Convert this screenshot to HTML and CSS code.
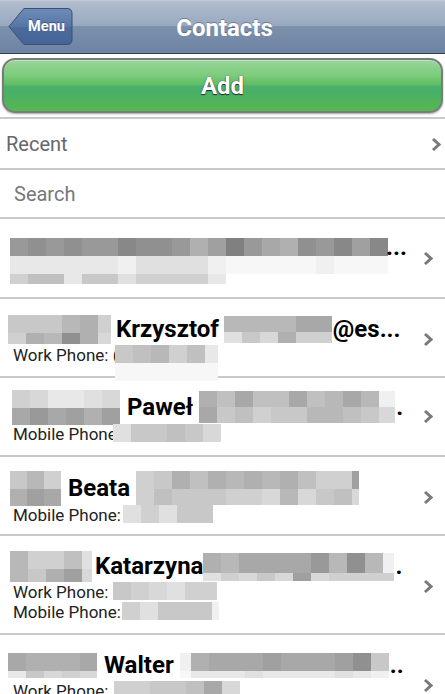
FILE: index.html
```html
<!DOCTYPE html>
<html lang="en">
<head>
<meta charset="utf-8">
<title>Contacts</title>
<link rel="stylesheet" href="styles.css">
</head>
<body>
<header class="navbar">
  <button class="back" type="button">
    <svg class="back-shape" viewBox="0 0 65 37" width="65" height="37" aria-hidden="true">
      <defs>
        <linearGradient id="bk" x1="0" y1="0" x2="0" y2="1">
          <stop offset="0" stop-color="#6e8cb8"/>
          <stop offset="0.5" stop-color="#5676a6"/>
          <stop offset="0.52" stop-color="#4b6b9c"/>
          <stop offset="1" stop-color="#45649a"/>
        </linearGradient>
      </defs>
      <path d="M1 18.5 L15 1.5 Q15.8 0.5 17 0.5 H59 Q64 0.5 64 5.5 V31.5 Q64 36.5 59 36.5 H17 Q15.8 36.5 15 35.5 Z" fill="url(#bk)" stroke="#3a4f72" stroke-width="1"/>
    </svg>
    <span class="back-label">Menu</span>
  </button>
  <h1 class="title">Contacts</h1>
  <span class="nav-spacer"></span>
</header>

<div class="add-wrap">
  <button class="add-btn" type="button">Add</button>
</div>

<div class="recent">
  <span>Recent</span>
  <svg class="chev chev-recent" viewBox="0 0 10 15" width="10" height="15"><path d="M2 2 L8 7.5 L2 13"/></svg>
</div>

<div class="search">
  <input class="search-input" type="text" placeholder="Search">
</div>

<ul class="contacts">
  <li class="contact row1">
    <div class="body">
      <div class="l1 top">
        <div class="mz ml2">
          <div class="mr h18"><i class="m99"></i><i class="m90"></i><i class="m99"></i><i class="m90"></i><i class="m99"></i><i class="m99"></i><i class="m88"></i><i class="m90"></i><i class="m90"></i><i class="m99"></i><i class="mb0"></i><i class="ma0"></i><i class="m80"></i><i class="m99"></i><i class="ma8"></i><i class="mb0"></i><i class="m90"></i><i class="m99"></i><i class="m88"></i><i class="ma0"></i><i class="m88"></i></div>
          <div class="mr h18"><i class="me8"></i><i class="me8"></i><i class="me8"></i><i class="me8"></i><i class="me8"></i><i class="me8"></i><i class="mf0"></i><i class="me0"></i><i class="me0"></i><i class="me0"></i><i class="me0"></i><i class="mf0"></i><i class="mf8"></i><i class="mf8"></i><i class="mf8"></i><i class="mf8"></i><i class="mf8"></i><i class="mf0"></i><i class="mf8"></i><i class="mf8"></i><i class="mf8"></i></div>
          <div class="mr h10"><i class="md0"></i><i class="mc0"></i><i class="mc0"></i><i class="me8"></i><i class="mc8"></i><i class="mc8"></i><i class="me0"></i><i class="md0"></i><i class="md0"></i><i class="md0"></i><i class="md0"></i><i class="me8"></i></div>
        </div>
        <span class="name dots">...</span>
      </div>
    </div>
    <svg class="chev" viewBox="0 0 10 15" width="10" height="15"><path d="M2 2 L8 7.5 L2 13"/></svg>
  </li>

  <li class="contact">
    <div class="body">
      <div class="l1">
        <div class="mz">
          <div class="mr h18"><i class="mc8"></i><i class="mc8"></i><i class="mc8"></i><i class="mb8"></i><i class="mb0"></i><i class="md0 w13"></i></div>
          <div class="mr h11"><i class="md0"></i><i class="mb0"></i><i class="mb8"></i><i class="m90"></i><i class="mb0"></i><i class="md8 w13"></i></div>
        </div>
        <span class="name">Krzysztof</span>
        <div class="mz">
          <div class="mr h16"><i class="mb8"></i><i class="mb8"></i><i class="mb8"></i><i class="mb8"></i><i class="ma8"></i><i class="ma8"></i></div>
          <div class="mr h11"><i class="me0"></i><i class="mc8"></i><i class="md8"></i><i class="mb0"></i><i class="md0"></i><i class="md0"></i></div>
        </div>
        <span class="name tight">@es...</span>
      </div>
      <div class="l2">
        <span>Work Phone: (</span>
        <div class="mz mlm3">
          <div class="mr h18"><i class="mc8"></i><i class="mc0"></i><i class="mb8"></i><i class="md0"></i><i class="mc0"></i><i class="me8 w13"></i></div>
          <div class="mr h18"><i class="mf8"></i><i class="mf8"></i><i class="mf8"></i><i class="mf8"></i><i class="mf8"></i><i class="mf8 w13"></i></div>
        </div>
      </div>
    </div>
    <svg class="chev" viewBox="0 0 10 15" width="10" height="15"><path d="M2 2 L8 7.5 L2 13"/></svg>
  </li>

  <li class="contact tall up">
    <div class="body">
      <div class="l1">
        <div class="mz ml4">
          <div class="mr h18"><i class="md0"></i><i class="md8"></i><i class="me8"></i><i class="me8"></i><i class="me0"></i><i class="md8"></i></div>
          <div class="mr h17"><i class="ma8"></i><i class="m99"></i><i class="ma8"></i><i class="ma0"></i><i class="mb0"></i><i class="ma0"></i></div>
        </div>
        <span class="name wide">Paweł</span>
        <div class="mz">
          <div class="mr h16"><i class="mb0"></i><i class="mc0"></i><i class="ma8"></i><i class="mc0"></i><i class="mc0"></i><i class="ma8"></i><i class="mc0"></i><i class="mb8"></i><i class="ma8"></i><i class="mb8"></i><i class="mf0 w16"></i></div>
          <div class="mr h16"><i class="ma8"></i><i class="mc8"></i><i class="mc0"></i><i class="md0"></i><i class="mc8"></i><i class="mc8"></i><i class="mb8"></i><i class="mb8"></i><i class="mc0"></i><i class="mc8"></i><i class="md8 w16"></i></div>
        </div>
        <span class="name tight">.</span>
      </div>
      <div class="l2">
        <span>Mobile Phone:</span>
        <div class="mz mlm8">
          <div class="mr h18"><i class="me0"></i><i class="mc8"></i><i class="mc8"></i><i class="mc0"></i><i class="mc8"></i><i class="md8"></i></div>
        </div>
      </div>
    </div>
    <svg class="chev" viewBox="0 0 10 15" width="10" height="15"><path d="M2 2 L8 7.5 L2 13"/></svg>
  </li>

  <li class="contact tall">
    <div class="body">
      <div class="l1">
        <div class="mz ml2">
          <div class="mr h18"><i class="mc8 w17"></i><i class="mb8 w17"></i><i class="md0 w17"></i></div>
          <div class="mr h17"><i class="mb0 w17"></i><i class="ma0 w17"></i><i class="ma8 w17"></i></div>
        </div>
        <span class="name wide">Beata</span>
        <div class="mz">
          <div class="mr h18"><i class="md0"></i><i class="mc8"></i><i class="mb0"></i><i class="mc0"></i><i class="mb0"></i><i class="mb8"></i><i class="mb0"></i><i class="mb8"></i><i class="mb0"></i><i class="mc0"></i><i class="md0"></i><i class="md0"></i><i class="ma0 w7"></i></div>
          <div class="mr h16"><i class="md0"></i><i class="mc0"></i><i class="mc8"></i><i class="mc8"></i><i class="mc8"></i><i class="md0"></i><i class="md0"></i><i class="md8"></i><i class="mb8"></i><i class="md8"></i><i class="mc8"></i><i class="mc0"></i><i class="md8 w7"></i></div>
        </div>
      </div>
      <div class="l2">
        <span>Mobile Phone:</span>
        <div class="mz ml2">
          <div class="mr h18"><i class="me0"></i><i class="md0"></i><i class="me0"></i><i class="mc8"></i><i class="mc8"></i></div>
        </div>
      </div>
    </div>
    <svg class="chev" viewBox="0 0 10 15" width="10" height="15"><path d="M2 2 L8 7.5 L2 13"/></svg>
  </li>

  <li class="contact">
    <div class="body">
      <div class="l1">
        <div class="mz ml2">
          <div class="mr h18"><i class="mb8"></i><i class="md0"></i><i class="md0"></i><i class="mc0"></i><i class="me0 w10"></i></div>
          <div class="mr h13"><i class="mb8"></i><i class="mc8"></i><i class="mb0"></i><i class="ma0"></i><i class="md8 w10"></i></div>
        </div>
        <span class="name narrow">Katarzyna</span>
        <div class="mz">
          <div class="mr h20"><i class="mb0"></i><i class="mb8"></i><i class="ma8"></i><i class="ma8"></i><i class="ma8"></i><i class="ma8"></i><i class="m99"></i><i class="mb8"></i><i class="m90"></i><i class="mb8"></i><i class="mf0 w11"></i></div>
          <div class="mr h8"><i class="me0"></i><i class="md0"></i><i class="md8"></i><i class="mc8"></i><i class="md8"></i><i class="ma0"></i><i class="md8"></i><i class="md0"></i><i class="md0"></i><i class="md0"></i><i class="md0 w11"></i></div>
        </div>
        <span class="name tight">.</span>
      </div>
      <div class="l2">
        <span>Work Phone:</span>
        <div class="mz ml5">
          <div class="mr h18"><i class="mc8"></i><i class="md0"></i><i class="md8"></i><i class="me0"></i><i class="md0"></i><i class="md0 w14"></i></div>
        </div>
      </div>
      <div class="l2">
        <span>Mobile Phone:</span>
        <div class="mz ml1">
          <div class="mr h18"><i class="md0"></i><i class="me0"></i><i class="mc8"></i><i class="mc8"></i><i class="mc8"></i><i class="mf0 w7"></i></div>
        </div>
      </div>
    </div>
    <svg class="chev" viewBox="0 0 10 15" width="10" height="15"><path d="M2 2 L8 7.5 L2 13"/></svg>
  </li>

  <li class="contact">
    <div class="body">
      <div class="l1">
        <div class="mz">
          <div class="mr h18"><i class="ma8"></i><i class="mb0"></i><i class="mb0"></i><i class="mb0"></i><i class="ma8 w17"></i></div>
          <div class="mr h7"><i class="me8"></i><i class="mc8"></i><i class="md8"></i><i class="md0"></i><i class="md8 w17"></i></div>
        </div>
        <span class="name wide">Walter</span>
        <div class="mz">
          <div class="mr h18"><i class="mf0 w11"></i><i class="mb0"></i><i class="ma8"></i><i class="ma8"></i><i class="ma8"></i><i class="ma0"></i><i class="ma8"></i><i class="ma8"></i><i class="ma8"></i><i class="ma0"></i><i class="m90"></i><i class="mc8"></i></div>
          <div class="mr h7"><i class="mf8 w11"></i><i class="me8"></i><i class="me8"></i><i class="me8"></i><i class="me0"></i><i class="me8"></i><i class="me8"></i><i class="me8"></i><i class="me8"></i><i class="me0"></i><i class="me8"></i><i class="mf0"></i></div>
        </div>
        <span class="name tight">..</span>
      </div>
      <div class="l2">
        <span>Work Phone:</span>
        <div class="mz ml6">
          <div class="mr h18"><i class="md0"></i><i class="md0"></i><i class="mc8"></i><i class="mc8"></i><i class="mc0"></i><i class="ma8"></i><i class="md8"></i></div>
        </div>
      </div>
      <div class="l2">
        <span>Mobile Phone:</span>
      </div>
    </div>
    <svg class="chev" viewBox="0 0 10 15" width="10" height="15"><path d="M2 2 L8 7.5 L2 13"/></svg>
  </li>
</ul>
</body>
</html>
```

FILE: styles.css
```css
* { box-sizing: border-box; }

html, body {
  margin: 0;
  padding: 0;
  background: #fff;
}

body {
  font-family: Roboto, "Noto Sans", "Liberation Sans", sans-serif;
  width: 445px;
  overflow: hidden;
}

/* ---------- navigation bar ---------- */
.navbar {
  height: 54px;
  display: grid;
  grid-template-columns: 1fr auto 1fr;
  align-items: center;
  border-bottom: 1px solid #343f50;
  background: linear-gradient(#c3ccd9 0, #b1bdce 2px, #97a8bf 49%, #7d91ad 50%, #6c83a2 100%);
}

.back {
  position: relative;
  justify-self: start;
  margin-left: 8px;
  width: 65px;
  height: 37px;
  padding: 0 0 0 12px;
  border: 0;
  background: none;
  display: flex;
  align-items: center;
  justify-content: center;
}

.back-shape {
  position: absolute;
  left: 0;
  top: 0;
}

.back-label {
  position: relative;
  font-family: Roboto, sans-serif;
  font-weight: 700;
  font-size: 14.5px;
  color: #fff;
  text-shadow: 0 -1px 0 rgba(0, 0, 0, 0.35);
}

.title {
  margin: 0;
  padding: 2px 0 0 4px;
  font-size: 24px;
  font-weight: 700;
  color: #fff;
  text-shadow: 0 -1px 0 rgba(0, 0, 0, 0.3);
}

/* ---------- add button ---------- */
.add-wrap {
  padding: 4px 2px;
  border-bottom: 2px solid #c9c9c9;
}

.add-btn {
  display: block;
  width: 100%;
  height: 55px;
  padding-top: 2px;
  border: 2px solid #7b7b7b;
  border-radius: 13px;
  background: linear-gradient(#9ad69b 0%, #7ccb7c 30%, #60bd62 48%, #4bb06c 52%, #48af66 62%, #57b752 100%);
  box-shadow: inset 0 1px 0 rgba(255, 255, 255, 0.35), 0 1px 2px rgba(0, 0, 0, 0.35);
  font-family: Roboto, sans-serif;
  font-size: 24px;
  font-weight: 700;
  color: #fff;
  text-shadow: 0 1px 1px #222, 0 0 1px #333;
}

/* ---------- recent / search ---------- */
.recent {
  height: 51px;
  display: flex;
  align-items: center;
  justify-content: space-between;
  padding: 0 4px 0 6px;
  border-bottom: 2px solid #c9c9c9;
  font-size: 20px;
  color: #676767;
}

.search {
  height: 49px;
  display: flex;
  align-items: center;
  border-bottom: 2px solid #c9c9c9;
}

.search-input {
  width: 100%;
  border: 0;
  outline: none;
  background: transparent;
  padding: 0 0 0 14px;
  font-family: Roboto, sans-serif;
  font-size: 20px;
  color: #333;
}

.search-input::placeholder {
  color: #787878;
}

/* ---------- chevrons ---------- */
.chev {
  flex: none;
}

.chev path {
  fill: none;
  stroke: #7a7a7a;
  stroke-width: 3;
}

.chev-recent {
  margin-top: 2px;
}

/* ---------- contacts ---------- */
.contacts {
  list-style: none;
  margin: 0;
  padding: 0;
}

.contact {
  display: flex;
  align-items: center;
  min-height: 79px;
  padding: 15px 12px 11px 8px;
  border-bottom: 2px solid #c9c9c9;
}

.contact.row1 {
  padding-top: 13px;
  padding-bottom: 13px;
}

.contact.tall {
  padding-top: 12px;
  padding-bottom: 8px;
}

.contact.tall.up {
  padding-top: 10px;
  padding-bottom: 10px;
}

.contact .chev {
  margin-left: 8px;
}

.body {
  flex: 1;
  min-width: 0;
  display: flex;
  flex-direction: column;
}

.row1 .body {
  margin-top: 6px;
}

.l1 {
  display: flex;
  align-items: center;
  min-height: 31px;
}

.l1.top {
  align-items: flex-start;
}

.name {
  font-size: 24px;
  font-weight: 700;
  line-height: 31px;
  color: #000;
  white-space: nowrap;
  margin: 0 5px;
}

.name.wide { margin: 0 6px 0 7px; }
.name.narrow { margin: 0 0 0 3px; }
.name.tight { margin: 0 0 0 1px; }
.name.dots { line-height: 18px; margin: 0 0 0 -2px; }

.l2 {
  display: flex;
  align-items: flex-start;
  height: 20px;
  padding-left: 5px;
  font-size: 17px;
  line-height: 20px;
  color: #222;
  white-space: nowrap;
}

.tall .l2 {
  margin-top: -1px;
}

/* ---------- pixelated blur blocks ---------- */
.mz {
  display: flex;
  flex-direction: column;
  flex: none;
}

.mr { display: flex; }
.mr i { display: block; width: 18px; flex: none; }

.h7 { height: 7px; }
.h8 { height: 8px; }
.h10 { height: 10px; }
.h11 { height: 11px; }
.h13 { height: 13px; }
.h16 { height: 16px; }
.h17 { height: 17px; }
.h18 { height: 18px; }
.h20 { height: 20px; }

.mr i.w7 { width: 7px; }
.mr i.w10 { width: 10px; }
.mr i.w11 { width: 11px; }
.mr i.w13 { width: 13px; }
.mr i.w14 { width: 14px; }
.mr i.w16 { width: 16px; }
.mr i.w17 { width: 17px; }

.ml1 { margin-left: 1px; }
.ml2 { margin-left: 2px; }
.ml4 { margin-left: 4px; }
.ml5 { margin-left: 5px; }
.ml6 { margin-left: 6px; }
.mlm3 { margin-left: -3px; }
.mlm8 { margin-left: -8px; }

.m80 { background: #808080; }
.m88 { background: #888888; }
.m90 { background: #909090; }
.m99 { background: #999999; }
.ma0 { background: #a0a0a0; }
.ma8 { background: #a8a8a8; }
.mb0 { background: #b0b0b0; }
.mb8 { background: #b8b8b8; }
.mc0 { background: #c0c0c0; }
.mc8 { background: #c8c8c8; }
.md0 { background: #d0d0d0; }
.md8 { background: #d8d8d8; }
.me0 { background: #e0e0e0; }
.me8 { background: #e8e8e8; }
.mf0 { background: #f0f0f0; }
.mf8 { background: #f7f7f7; }
```
